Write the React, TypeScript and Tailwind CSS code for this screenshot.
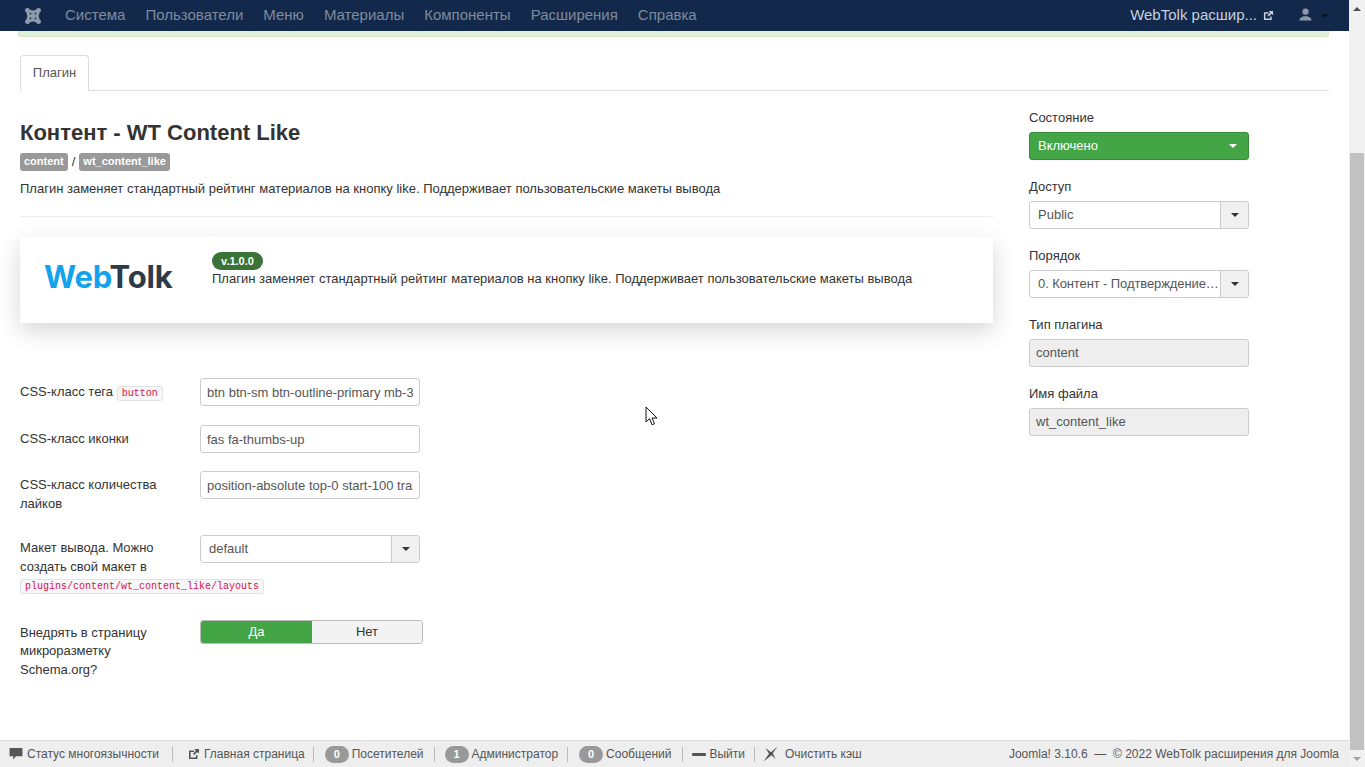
import { ReactNode } from "react";

function Caret({ className = "border-t-[#333]" }: { className?: string }) {
  return <span className={`h-0 w-0 border-x-[4px] border-t-[4px] border-x-transparent ${className}`} />;
}

function NewTabIcon({ className = "" }: { className?: string }) {
  return (
    <svg viewBox="0 0 12 12" className={className} fill="currentColor">
      <path d="M1 2.500h5v1.600H2.600v5.300h5.300V7.200h1.600V11H1z" />
      <path d="M6.200 1H11v4.800L9.300 4.100 6.300 7.100 4.900 5.700l3-3z" />
    </svg>
  );
}

function JoomlaLogo() {
  return (
    <svg viewBox="0 0 18 18" className="h-[18px] w-[18px]">
      <path
        d="M1 3.500a2.500 2.500 0 0 1 4.800-1Q9 4.500 12.200 2.500a2.500 2.500 0 0 1 4.800 1q0 1.500-1.500 2.300-1.500 3.200 0 6.400 1.500.8 1.500 2.300a2.500 2.500 0 0 1-4.800 1q-3.200-2-6.400 0a2.500 2.500 0 0 1-4.800-1q0-1.500 1.500-2.300 1.500-3.200 0-6.400Q1 5 1 3.500z"
        fill="#8f9aaa"
      />
      <circle cx="6.500" cy="6.500" r="1" fill="#2a3d5c" />
      <circle cx="11.500" cy="6.500" r="1" fill="#2a3d5c" />
      <circle cx="6.500" cy="11.500" r="1" fill="#2a3d5c" />
      <circle cx="11.500" cy="11.500" r="1" fill="#2a3d5c" />
    </svg>
  );
}

function Topbar() {
  const items = ["Система", "Пользователи", "Меню", "Материалы", "Компоненты", "Расширения", "Справка"];
  return (
    <header className="flex h-[31px] shrink-0 items-center bg-[#13294b]">
      <div className="ml-[24px] mr-[23px] flex items-center">
        <JoomlaLogo />
      </div>
      <nav className="flex gap-[20px] text-[15px] text-[#7f8b9d]">
        {items.map((item) => (
          <span key={item}>{item}</span>
        ))}
      </nav>
      <div className="ml-auto flex items-center text-[#c6d0de]">
        <span className="text-[15px]">WebTolk расшир...</span>
        <NewTabIcon className="ml-[6px] h-[11px] w-[11px]" />
        <svg viewBox="0 0 14 14" className="ml-[25px] mb-[3px] h-[13px] w-[13px]" fill="#8b97a8">
          <circle cx="7" cy="4" r="3.400" />
          <path d="M0.500 13.500c0-3 2.500-3.500 4.500-4.500h4c2 1 4.500 1.500 4.500 4.500z" />
        </svg>
        <span className="ml-[9px] mr-[20px] flex items-center">
          <Caret className="border-t-[#071426]" />
        </span>
      </div>
    </header>
  );
}

function Badge({ children }: { children: ReactNode }) {
  return <span className="rounded-[3px] bg-[#999] px-[4px] pb-[2px] text-[11px] font-bold leading-[16px] text-white">{children}</span>;
}

function Code({ children }: { children: ReactNode }) {
  return (
    <code className="rounded-[3px] border border-[#e1e1e8] bg-[#f7f7f9] px-[4px] py-[1px] font-['Liberation_Mono',monospace] text-[10px] leading-[14px] text-[#dd1144]">
      {children}
    </code>
  );
}

function TextInput({ value }: { value: string }) {
  return (
    <input
      readOnly
      value={value}
      className="h-[28px] w-[220px] rounded-[3px] border border-[#ccc] bg-white px-[6px] text-[13px] text-[#555] outline-none"
    />
  );
}

function Chosen({ value, textClass = "" }: { value: string; textClass?: string }) {
  return (
    <div className="flex h-[28px] w-[220px] overflow-hidden rounded-[3px] border border-[#ccc] bg-white text-[13px] leading-[26px] text-[#555]">
      <span className={`min-w-0 flex-1 whitespace-nowrap pl-[8px] ${textClass}`}>{value}</span>
      <span className="flex w-[28px] shrink-0 items-center justify-center border-l border-[#ccc] bg-[#f0f0f0]">
        <Caret />
      </span>
    </div>
  );
}

function SideField({ label, children }: { label: string; children: ReactNode }) {
  return (
    <div>
      <div className="mb-[5px] text-[13px] leading-[18px] text-[#333]">{label}</div>
      {children}
    </div>
  );
}

function ReadOnly({ value }: { value: string }) {
  return (
    <div className="h-[28px] w-[220px] rounded-[3px] border border-[#ccc] bg-[#eee] px-[6px] text-[13px] leading-[26px] text-[#555]">{value}</div>
  );
}

function Sidebar() {
  return (
    <aside className="ml-[36px] flex w-[220px] flex-col gap-[18px] pt-[18px]">
      <SideField label="Состояние">
        <div className="flex h-[28px] items-center justify-between rounded-[3px] border border-[#378a3a] bg-[#43a546] pl-[8px] pr-[11px] text-[13px] text-white">
          <span>Включено</span>
          <Caret className="border-t-white" />
        </div>
      </SideField>
      <SideField label="Доступ">
        <Chosen value="Public" />
      </SideField>
      <SideField label="Порядок">
        <Chosen value="0. Контент - Подтверждение…" textClass="tracking-[-0.1px]" />
      </SideField>
      <SideField label="Тип плагина">
        <ReadOnly value="content" />
      </SideField>
      <SideField label="Имя файла">
        <ReadOnly value="wt_content_like" />
      </SideField>
    </aside>
  );
}

function FormRow({ label, children, className, labelPad = "pt-[5px]" }: { label: ReactNode; children: ReactNode; className: string; labelPad?: string }) {
  return (
    <div className={`flex items-start ${className}`}>
      <div className={`w-[180px] pr-[16px] text-[13px] leading-[18.500px] text-[#333] ${labelPad}`}>{label}</div>
      {children}
    </div>
  );
}

function Description() {
  return <>Плагин заменяет стандартный рейтинг материалов на кнопку like. Поддерживает пользовательские макеты вывода</>;
}

function MainColumn() {
  return (
    <div className="w-[973px] shrink-0">
      <h1 className="mt-[27px] text-[22px] font-bold leading-[30px] text-[#333]">Контент - WT Content Like</h1>
      <div className="mt-[5px] flex h-[18px] items-center gap-[4px] text-[13px] text-[#333]">
        <Badge>content</Badge>
        <span>/</span>
        <Badge>wt_content_like</Badge>
      </div>
      <p className="mt-[9px] text-[13px] leading-[18px] text-[#333]">
        <Description />
      </p>
      <div className="mt-[18px] h-px bg-[#eee]" />

      <section className="mt-[20px] flex h-[86px] bg-white shadow-[0_8px_22px_rgba(0,0,0,0.16)]">
        <div className="w-[192px] pl-[24px] pt-[20px] font-['Inter',sans-serif] text-[31px] font-bold leading-[40px] tracking-[-0.2px]">
          <span className="text-[#12a3ec]">Web</span>
          <span className="text-[#2e3a48]">Tolk</span>
        </div>
        <div className="pt-[15px]">
          <span className="block w-[51px] rounded-full bg-[#3a7238] text-center text-[11px] font-bold leading-[18px] text-white">v.1.0.0</span>
          <p className="text-[13px] leading-[17px] text-[#333]">
            <Description />
          </p>
        </div>
      </section>

      <FormRow className="mt-[55px]" label={<>CSS-класс тега <Code>button</Code></>}>
        <TextInput value="btn btn-sm btn-outline-primary mb-3" />
      </FormRow>
      <FormRow className="mt-[19px]" label="CSS-класс иконки">
        <TextInput value="fas fa-thumbs-up" />
      </FormRow>
      <FormRow className="mt-[18px]" label="CSS-класс количества лайков">
        <TextInput value="position-absolute top-0 start-100 translate-middle" />
      </FormRow>
      <FormRow className="mt-[22px]" labelPad="pt-[4px]" label={<>Макет вывода. Можно создать свой макет в <span className="whitespace-nowrap"><Code>plugins/content/wt_content_like/layouts</Code></span></>}>
        <Chosen value="default" />
      </FormRow>
      <FormRow className="mt-[25px]" labelPad="pt-[4px]" label="Внедрять в страницу микроразметку Schema.org?">
        <div className="flex h-[24px] w-[223px] overflow-hidden rounded-[3px] border border-[#bbb] text-center text-[13px] leading-[22px]">
          <span className="w-[111px] bg-[#43a546] font-medium text-white">Да</span>
          <span className="flex-1 bg-[#f3f3f3] text-[#333]">Нет</span>
        </div>
      </FormRow>
    </div>
  );
}

function FooterItem({ icon, label, gap = "gap-[3px]", sep = "ml-[9px] mr-[11px]" }: { icon: ReactNode; label: string; gap?: string; sep?: string }) {
  return (
    <>
      <span className={`flex items-center ${gap}`}>
        {icon}
        {label}
      </span>
      {sep && <span className={`h-[15px] w-px bg-[#bbb] ${sep}`} />}
    </>
  );
}

function Count({ n }: { n: number }) {
  return <span className="w-[24px] rounded-full bg-[#999] text-center text-[11px] font-bold leading-[17px] text-white">{n}</span>;
}

function Footer() {
  return (
    <footer className="flex h-[27px] shrink-0 items-center border-t border-[#ddd] bg-[#eeeeee] pl-[9px] pr-[10px] text-[12px] text-[#555]">
      <FooterItem
        label="Статус многоязычности"
        gap="gap-[4px]"
        sep="ml-[13px] mr-[15px]"
        icon={
          <svg viewBox="0 0 14 13" className="h-[12px] w-[14px]" fill="#555">
            <path d="M1 0h12a1 1 0 0 1 1 1v7a1 1 0 0 1-1 1H7l-3 3.500V9H1a1 1 0 0 1-1-1V1a1 1 0 0 1 1-1z" />
          </svg>
        }
      />
      <FooterItem label="Главная страница" gap="gap-[4px]" sep="ml-[8px] mr-[11px]" icon={<NewTabIcon className="h-[12px] w-[12px]" />} />
      <FooterItem label="Посетителей" sep="ml-[10px] mr-[10px]" icon={<Count n={0} />} />
      <FooterItem label="Администратор" icon={<Count n={1} />} />
      <FooterItem label="Сообщений" sep="ml-[11px] mr-[9px]" icon={<Count n={0} />} />
      <FooterItem label="Выйти" gap="gap-[3px]" sep="ml-[9px] mr-[8px]" icon={<span className="h-[3px] w-[14px] rounded-[1px] bg-[#555]" />} />
      <FooterItem
        sep=""
        label="Очистить кэш"
        gap="gap-[7px]"
        icon={
          <svg viewBox="0 0 15 16" className="h-[16px] w-[15px]" fill="#555">
            <path d="M14.500 0.500L8 6.200 2.500 2 6 7.800 0.500 15.500 8.500 9.300 12.500 13 9.800 7.200z" />
          </svg>
        }
      />
      <span className="ml-auto">Joomla! 3.10.6 &nbsp;—&nbsp; © 2022 WebTolk расширения для Joomla</span>
    </footer>
  );
}

function Scrollbar() {
  return (
    <div className="flex w-[16px] shrink-0 flex-col items-center bg-[#f1f1f1]">
      <div className="flex h-[17px] shrink-0 items-center justify-center">
        <span className="h-0 w-0 border-x-[4px] border-b-[4px] border-x-transparent border-b-[#505050]" />
      </div>
      <div className="mt-[136px] h-[597px] w-[14px] bg-[#c1c1c1]" />
      <div className="mt-auto flex h-[17px] shrink-0 items-center justify-center">
        <span className="h-0 w-0 border-x-[4px] border-t-[4px] border-x-transparent border-t-[#a3a3a3]" />
      </div>
    </div>
  );
}

export default function App() {
  return (
    <div className="relative flex h-[767px] w-full overflow-hidden bg-white font-['Liberation_Sans',Arial,sans-serif]">
      <div className="flex min-w-0 flex-1 flex-col">
        <Topbar />
        <div className="flex-1 px-[20px]">
          <div className="ml-[-2px] h-[6px] rounded-b-[3px] border-x border-b border-[#d6e9c6] bg-[#dff0d8]" />
          <div className="mt-[18px] flex h-[36px] border-b border-[#ddd]">
            <span className="h-[36px] w-[69px] rounded-t-[4px] border border-b-0 border-[#ddd] bg-white text-center text-[13px] leading-[34px] text-[#555]">
              Плагин
            </span>
          </div>
          <div className="flex">
            <MainColumn />
            <Sidebar />
          </div>
        </div>
        <Footer />
      </div>
      <Scrollbar />
      <svg viewBox="0 0 13 20" className="absolute left-[645px] top-[406px] h-[20px] w-[13px]">
        <path d="M1 1v15l3.500-3.300 2.500 6 2.500-1-2.500-5.700h5z" fill="#fff" stroke="#111" strokeWidth="1" />
      </svg>
    </div>
  );
}
